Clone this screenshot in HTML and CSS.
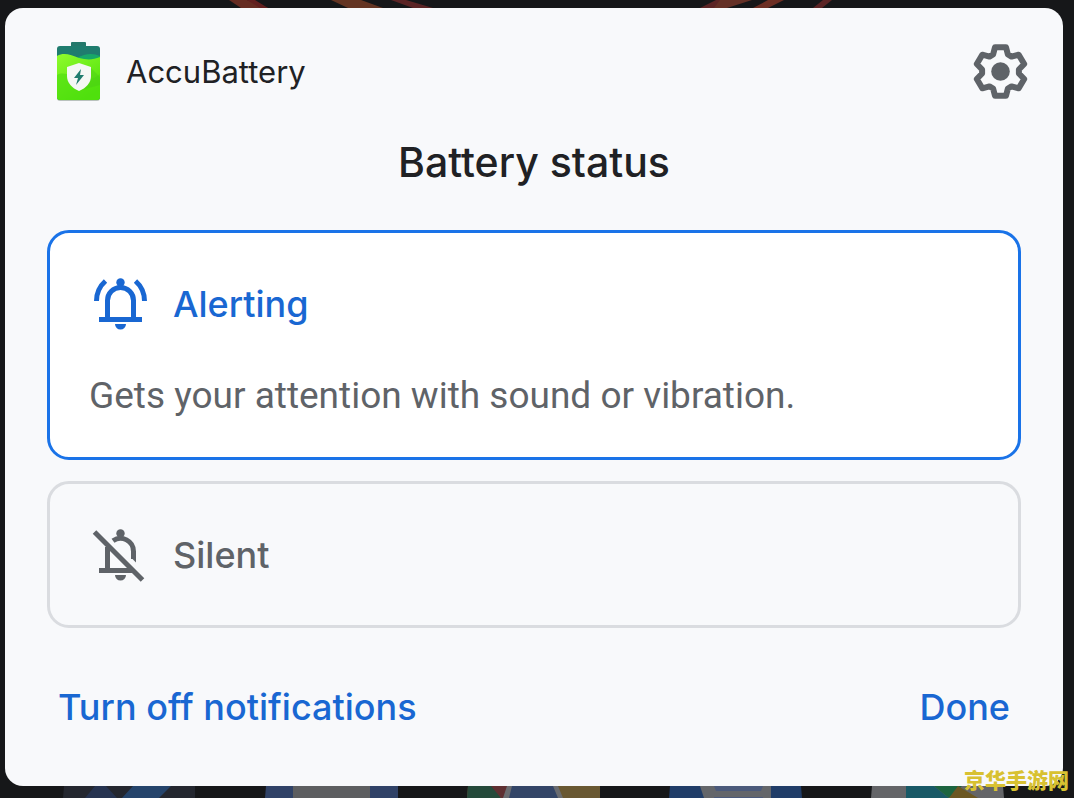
FILE: index.html
```html
<!DOCTYPE html>
<html lang="en">
<head>
<meta charset="utf-8">
<meta name="viewport" content="width=device-width, initial-scale=1">
<title>Battery status</title>
<link rel="stylesheet" href="styles.css">
</head>
<body>
<svg class="backdrop backdrop-top" viewBox="0 0 1074 8" preserveAspectRatio="none" aria-hidden="true">
  <path d="M229 0h18l21 8h-27z" fill="#662c22"/><path d="M247 0h8l13 8h-8z" fill="#62201f"/>
  <path d="M331 0h30l22 8h-35z" fill="#643523"/><path d="M391 0h15l27 8h-20z" fill="#5b2425"/>
  <path d="M720 0v8h-20l16-8z" fill="#5b2425"/><path d="M720 0h32l-25 8h-13z" fill="#643026"/>
  <path d="M768 0h16l-16 8h-15z" fill="#6c2e23"/><path d="M823 0h9l-10 8h-9z" fill="#5b2425"/>
</svg>
<main class="sheet">
  <header class="app">
    <svg class="icon" viewBox="0 0 63 63" aria-hidden="true">
      <defs>
        <linearGradient id="lime" x1="0" y1="0" x2=".6" y2="1"><stop offset="0" stop-color="#90fb2c"/><stop offset="1" stop-color="#4fe20b"/></linearGradient>
        <clipPath id="cell"><rect x="10" y="6" width="43" height="54" rx="3"/></clipPath>
      </defs>
      <rect x="10" y="7" width="43" height="54" rx="3" fill="#b9c2bd"/>
      <path d="M24 8V3q0-1 1-1h13q1 0 1 1v5z" fill="#24786b"/>
      <g clip-path="url(#cell)">
        <path d="M10 6h43v54H10z" fill="#1f7c6e"/>
        <path d="M30 18q12-7 23-2v12H30z" fill="#17a868"/>
        <path d="M10 16c7-4 14-1 22 2 8 2 14 2 21-1v43H10z" fill="url(#lime)"/>
        <path d="M10 35c7-4 14 1 22 3s14 2 21-4v26H10z" fill="#50df10" opacity=".65"/>
        <path d="M43 27l10 10v8L34 50z" fill="#45c617" opacity=".35"/>
      </g>
      <path d="M32 23l12 4v9c0 7-5 12-12 15-7-3-12-8-12-15v-9z" fill="#f4f7f5"/>
      <path d="M34 29l-7 9h4l-2 7 8-10h-4z" fill="#1f7c6e"/>
    </svg>
    <span class="app-name">AccuBattery</span>
    <button class="settings" type="button" aria-label="Settings">
      <svg class="icon" viewBox="0 0 63 63" aria-hidden="true">
        <g transform="translate(31.5 31.5)">
          <path class="line line-bold" d="M-5.5-24.2H5.5L7.4-17 11-14.9 18.2-16.800 23.700-7.500 18.400-2V2L23.700 7.500 18.200 16.800 11 14.900 7.400 17 5.500 24.200H-5.500L-7.400 17-11 14.900-18.200 16.800-23.700 7.500-18.400 2V-2L-23.700-7.500-18.200-16.800-11-14.900-7.400-17z"/>
          <circle r="9.3" fill="currentColor"/>
        </g>
      </svg>
    </button>
  </header>
  <h1 class="title">Battery status</h1>
  <div class="options" role="radiogroup" aria-label="Battery status">
    <label class="option option-on">
      <input class="choice" type="radio" name="level" checked>
      <span class="option-head">
        <svg class="icon" viewBox="0 0 63 63" aria-hidden="true">
          <path class="line" d="M18.5 47V28.5a13 13 0 0 1 26 0V47M10 47.5H53M7.5 29Q7.5 17 16.5 9M55.5 29Q55.5 17 46.5 9"/>
          <circle cx="31.5" cy="10.5" r="4.2" fill="currentColor"/>
          <path d="M26 52h11a5.5 5.5 0 0 1-11 0z" fill="currentColor"/>
        </svg>
        <span class="option-name">Alerting</span>
      </span>
      <span class="option-text">Gets your attention with sound or vibration.</span>
    </label>
    <label class="option">
      <input class="choice" type="radio" name="level">
      <span class="option-head">
        <svg class="icon" viewBox="0 0 63 63" aria-hidden="true">
          <path class="line" d="M18.5 47V24M24 17.8A13 13 0 0 1 44.5 28.5V36M10 47.5H45M5.500 9L53.500 57"/>
          <path d="M42 34.500h5v5z" fill="currentColor"/>
          <circle cx="31.5" cy="10.5" r="4.2" fill="currentColor"/>
          <path d="M26 52h11a5.5 5.5 0 0 1-11 0z" fill="currentColor"/>
        </svg>
        <span class="option-name">Silent</span>
      </span>
    </label>
  </div>
  <footer class="actions">
    <button class="action" type="button">Turn off notifications</button>
    <button class="action" type="button">Done</button>
  </footer>
</main>
<svg class="backdrop backdrop-bottom" viewBox="0 0 1074 12" preserveAspectRatio="none" aria-hidden="true">
  <path d="M64 0h131v12H63z" fill="#24272f"/><path d="M95 0h11l11 12H85z" fill="#263350"/><path d="M133 0h38l-12 12h-37z" fill="#25446b"/>
  <path d="M266 0h132v12H265z" fill="#304267"/><path d="M293 0h77v12h-77z" fill="#5d5e60"/>
  <path d="M468 0h132v12H467z" fill="#695832"/><path d="M468 0h25l8 12h-34z" fill="#24493a"/><path d="M491 0h20v12h-10z" fill="#5e2f31"/>
  <path d="M507 0h51l5 12h-60z" fill="#6a6c70"/><path d="M512 0h41l5 12h-49z" fill="#334567"/>
  <path d="M670 0h131l1 12H669z" fill="#203d68"/><path d="M700 0h71v12h-67z" fill="#64666a"/><path d="M714 0h49l-2 5h-45zM714 11h49v1h-49z" fill="#4b5a7b"/>
  <path d="M872 0h131l1 12H871z" fill="#646568"/><path d="M906 0h28l15 12h-43z" fill="#195966"/><path d="M934 0h28l-13 12z" fill="#1c643f"/><path d="M958 0l20 12h-29z" fill="#6c5722"/>
</svg>
<div class="watermark" lang="zh">京华手游网</div>
</body>
</html>
```
FILE: styles.css
```css
* { box-sizing: border-box; }

body {
  display: flex;
  flex-direction: column;
  min-height: 100vh;
  margin: 0;
  background: #161719;
  color: #202124;
  font-family: Inter, "Liberation Sans", sans-serif;
}

.backdrop { display: block; flex: none; width: 100%; }
.backdrop-top { height: 8px; }
.backdrop-bottom { height: 12px; }

.sheet {
  flex: 1;
  margin: 0 11px 0 5px;
  padding: 32px 42px 54px;
  border-radius: 18px;
  background: #f8f9fb;
}

.icon { display: block; flex: none; width: 63px; height: 63px; }
.line { fill: none; stroke: currentColor; stroke-width: 5; stroke-linejoin: round; }
.line-bold { stroke-width: 6; }

button {
  padding: 0;
  border: 0;
  background: none;
  font: inherit;
  cursor: pointer;
}

.app { display: flex; align-items: center; gap: 16px; margin-right: -11px; }
.app-name { font-size: 31px; line-height: 40px; }
.settings { margin-left: auto; color: #5f6368; }

.title {
  margin: 31px 0 40px;
  font-size: 41px;
  font-weight: 500;
  line-height: 56px;
  text-align: center;
}

.options { display: grid; gap: 21px; }
.option {
  position: relative;
  display: grid;
  gap: 38px;
  padding: 42px;
  color: #5f6368;
  cursor: pointer;
}
.option-on { color: #1967d2; }

.choice {
  position: absolute;
  inset: 0;
  margin: 0;
  border: 3px solid #dadce0;
  border-radius: 22px;
  appearance: none;
}
.choice:checked { border-color: #1a73e8; background: #fff; }

.option-head { position: relative; display: flex; align-items: center; gap: 21px; }
.option-name { font-size: 36px; font-weight: 500; line-height: 44px; }
.option-text {
  position: relative;
  color: #5f6368;
  font-family: Roboto, "Liberation Sans", sans-serif;
  font-size: 37px;
  line-height: 45px;
}

.actions { display: flex; justify-content: space-between; margin-top: 55px; padding: 0 11px; }
.action { color: #1967d2; font-size: 36px; font-weight: 500; line-height: 48px; }

.watermark {
  position: absolute;
  right: 5px;
  bottom: 3px;
  color: #d8c131;
  font-family: "Noto Sans CJK SC", sans-serif;
  font-size: 21px;
  font-weight: 900;
  line-height: 32px;
}
```
